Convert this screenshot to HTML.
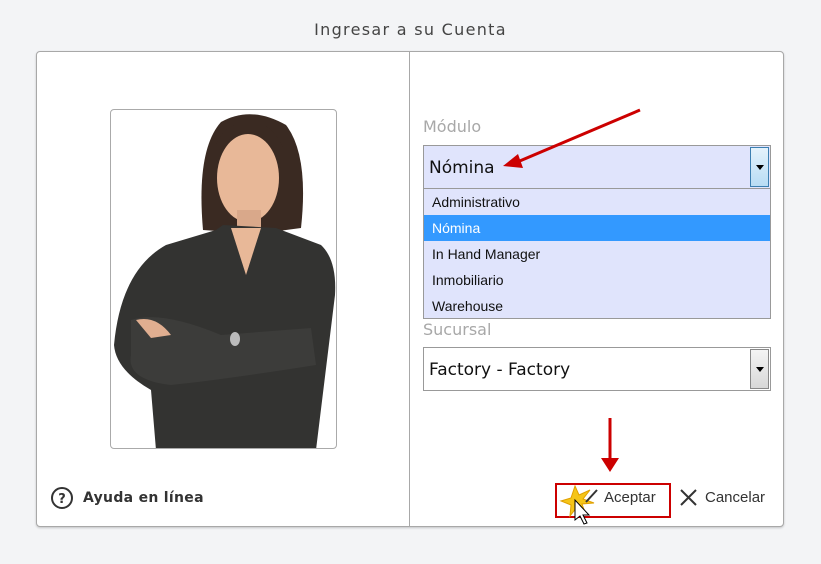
<!DOCTYPE html>
<html><head><meta charset="utf-8"><style>
*{margin:0;padding:0;box-sizing:border-box}
body{width:821px;height:564px;background:#f3f4f6;font-family:"DejaVu Sans","Liberation Sans",sans-serif;position:relative;overflow:hidden}
.t{position:absolute;top:20px;left:0;width:821px;text-align:center;font-size:16px;color:#444;letter-spacing:1.3px}
.box{position:absolute;left:36px;top:51px;width:748px;height:476px;background:#fff;border:1px solid #a8a8a8;border-radius:4px;box-shadow:0 1px 2px rgba(0,0,0,.2)}
.div{position:absolute;left:409px;top:52px;width:1px;height:474px;background:#a8a8a8}
.photo{position:absolute;left:110px;top:109px;width:227px;height:340px;border:1px solid #aaa;border-radius:4px;overflow:hidden;background:#fff}
.lbl{position:absolute;left:423px;font-size:16px;color:#a8a8a8}
.sel{position:absolute;left:423px;width:348px;border:1px solid #999;font-size:17px;color:#111;padding-left:5px}
.btn{position:absolute;right:1px;top:1px;bottom:1px;width:19px;border:1px solid #888;background:linear-gradient(#f4f4f4,#d8d8d8)}
.btn:after{content:"";position:absolute;left:5px;top:17px;border:4px solid transparent;border-top:5px solid #000}
.list{position:absolute;left:423px;top:188px;width:348px;height:131px;border:1px solid #999;background:#e0e4fc;font-family:"Liberation Sans",sans-serif;font-size:14px;color:#111}
.list div{height:26px;line-height:26px;padding-left:8px}
.list .on{background:#3399ff;color:#fff}
.bt{position:absolute;top:489px;font-size:15px;color:#333;font-family:"Liberation Sans",sans-serif}
</style></head><body>
<div class="t">Ingresar a su Cuenta</div>
<div class="box"></div>
<div class="div"></div>
<div class="photo"><svg width="227" height="340" viewBox="0 0 227 340">
<path d="M92 120 Q85 40 110 12 Q140 -5 175 15 Q198 45 190 118 L160 122 L120 122 Z" fill="#3a2a22"/>
<ellipse cx="137" cy="68" rx="31" ry="44" fill="#e8b898"/>
<path d="M104 55 Q115 20 140 24 Q165 28 170 60 L172 38 Q160 10 135 12 Q108 15 102 45 Z" fill="#3a2a22"/>
<path d="M126 100 L150 100 L150 125 L126 125 Z" fill="#d9a88a"/>
<path d="M55 135 L105 120 L112 115 L165 118 L210 135 Q226 150 224 185 L205 340 L45 340 L40 280 Q5 260 3 235 Q10 160 55 135 Z" fill="#333331"/>
<path d="M120 118 L135 165 L150 118 Z" fill="#e8b898"/>
<path d="M20 210 Q50 200 110 225 L200 218 L205 255 Q110 270 60 275 Q15 270 20 245 Z" fill="#3c3c3a"/>
<ellipse cx="124" cy="229" rx="5" ry="7" fill="#bbb"/>
<path d="M25 210 Q45 205 60 225 L40 228 Z" fill="#e0ae90"/>
</svg></div>
<div class="lbl" style="top:117px">Módulo</div>
<div class="sel" style="top:145px;height:44px;line-height:44px;background:#e0e4fc">Nómina<div class="btn" style="background:linear-gradient(#e4f2fc,#b8dcf4);border-color:#3c7fb1"></div></div>
<div class="list"><div>Administrativo</div><div class="on">Nómina</div><div>In Hand Manager</div><div>Inmobiliario</div><div>Warehouse</div></div>
<div class="lbl" style="top:320px">Sucursal</div>
<div class="sel" style="top:347px;height:44px;line-height:44px;background:#fff">Factory - Factory<div class="btn"></div></div>
<svg style="position:absolute;left:0;top:0" width="821" height="564">
<line x1="640" y1="110" x2="515" y2="163" stroke="#c00" stroke-width="3"/>
<polygon points="503,166 518,154 523,168" fill="#c00"/>
<line x1="610" y1="418" x2="610" y2="460" stroke="#c00" stroke-width="3"/>
<polygon points="601,458 619,458 610,472" fill="#c00"/>
<circle cx="62" cy="498" r="10" fill="none" stroke="#333" stroke-width="2"/>
<text x="62" y="503" font-size="13" font-weight="bold" text-anchor="middle" fill="#333" font-family="DejaVu Sans,sans-serif">?</text>
<rect x="556" y="484" width="114" height="33" fill="none" stroke="#c00" stroke-width="2"/>
<polygon points="575,486 579,495 590,490 583,499 594,503 582,504 586,515 577,507 570,516 571,505 561,501 571,498" fill="#f5c518" stroke="#e0a000"/>
<path d="M586 502 L597 490" stroke="#333" stroke-width="2"/>
<path d="M575 500 L575 520 L580 516 L584 524 L587 523 L583 515 L589 515 Z" fill="#fff" stroke="#000"/>
<path d="M681 490 L696 505 M696 490 L681 505" stroke="#333" stroke-width="2"/>
</svg>
<div style="position:absolute;left:83px;top:490px;font-size:14px;font-weight:bold;color:#333;letter-spacing:.3px">Ayuda en línea</div>
<div class="bt" style="left:604px">Aceptar</div>
<div class="bt" style="left:705px">Cancelar</div>
</body></html>
